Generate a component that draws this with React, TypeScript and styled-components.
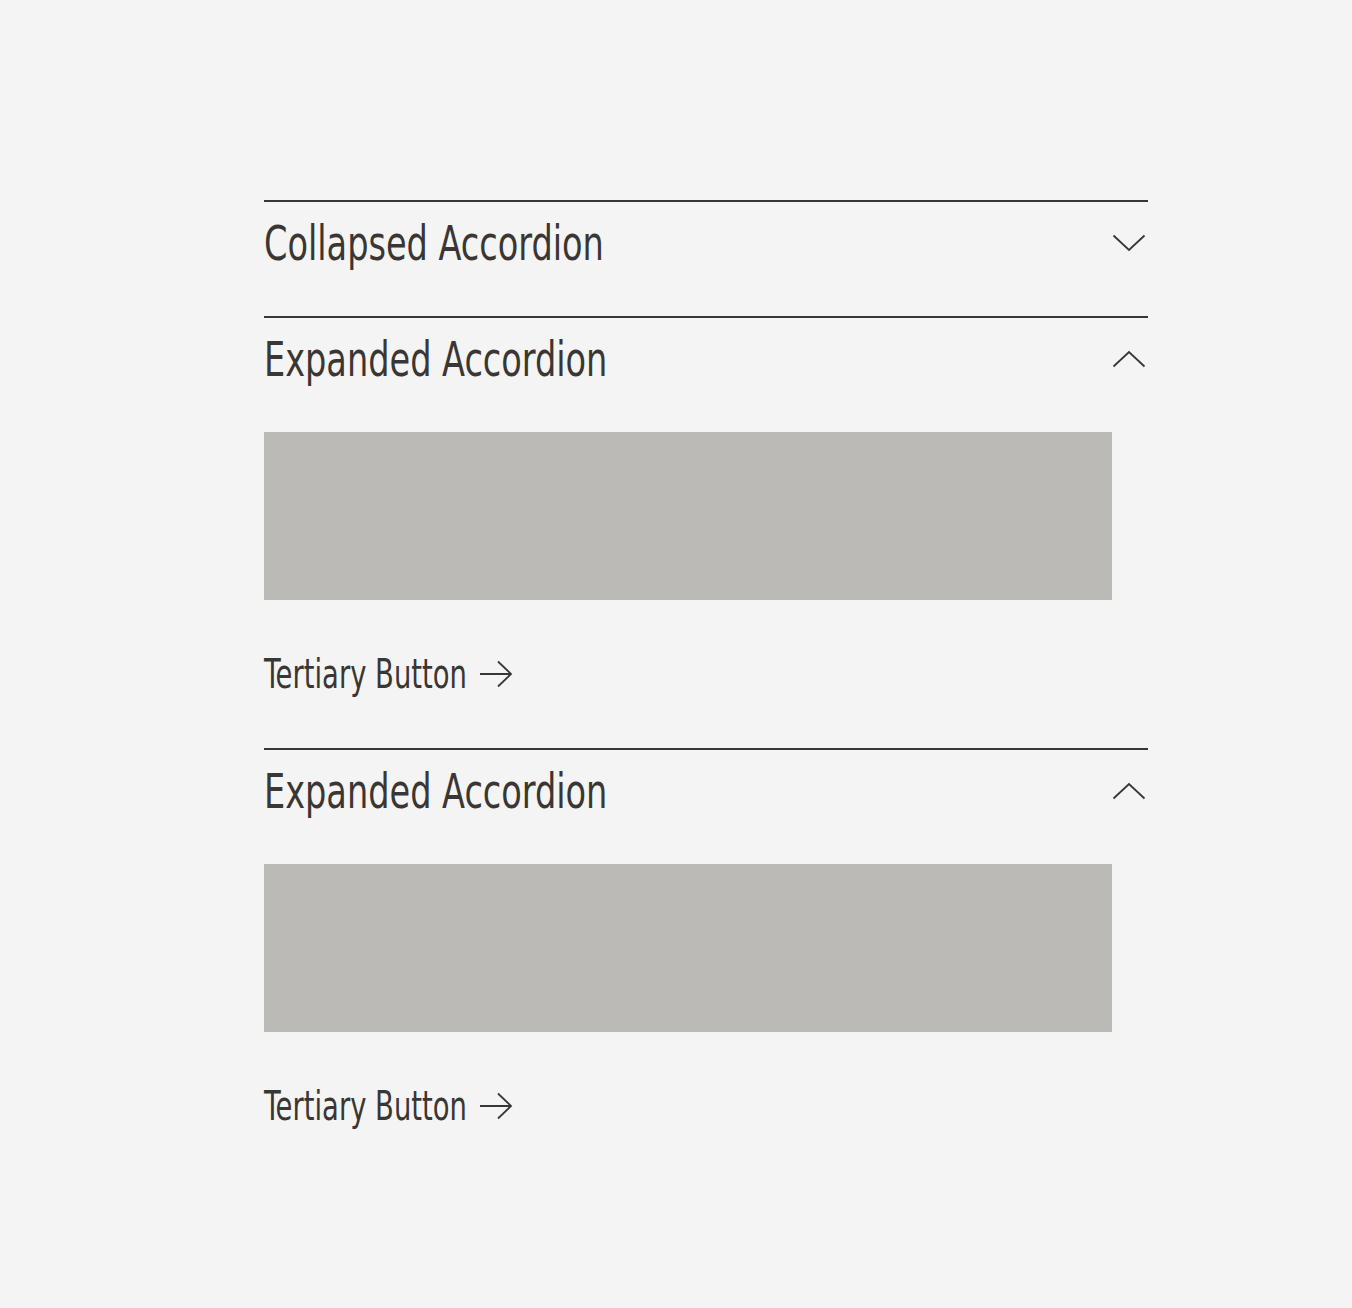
import React from 'react';
import styled, { createGlobalStyle } from 'styled-components';

const GlobalStyle = createGlobalStyle`
	html, body {
		margin: 0;
		padding: 0;
		background: #f4f4f4;
	}
	body {
		font-family: 'DejaVu Sans Condensed', 'Liberation Sans', sans-serif;
		color: #3a3633;
	}
`;

const Page = styled.div`
	min-height: 1308px;
	padding-top: 200px;
	box-sizing: border-box;
`;

const List = styled.div`
	width: 884px;
	margin-left: 264px;
`;

const Item = styled.section`
	border-top: 2px solid #3a3633;
`;

const Header = styled.button`
	display: flex;
	align-items: center;
	justify-content: space-between;
	width: 100%;
	height: 82px;
	padding: 0;
	border: 0;
	background: none;
	color: inherit;
	font: inherit;
	cursor: pointer;
`;

// the narrow face is wider than the reference one, so squeeze it horizontally
interface SqueezeProps {
	boxWidth: number;
	ratio: number;
}

const Squeeze = styled.span<SqueezeProps>`
	display: block;
	width: ${(props) => props.boxWidth}px;
	white-space: nowrap;
	text-align: left;

	span {
		display: inline-block;
		transform: scaleX(${(props) => props.ratio});
		transform-origin: left center;
	}
`;

const Title = styled.span`
	font-size: 48px;
	font-weight: 400;
`;

const Chevron = styled.svg`
	width: 34px;
	height: 18px;
	margin-right: 2px;
`;

interface PanelProps {
	open: boolean;
}

const Panel = styled.div<PanelProps>`
	padding-top: ${(props) => (props.open ? '32px' : '0')};
	padding-bottom: ${(props) => (props.open ? '56px' : '32px')};
`;

const Placeholder = styled.div`
	width: 848px;
	height: 168px;
	background: #bbbab6;
`;

const TertiaryButton = styled.a`
	display: inline-flex;
	align-items: center;
	gap: 14px;
	height: 36px;
	margin-top: 56px;
	font-size: 40px;
	color: inherit;
	text-decoration: none;
	cursor: pointer;
`;

const Arrow = styled.svg`
	width: 34px;
	height: 28px;
	margin-left: -1px;
`;

const ChevronIcon = ({ up }: { up: boolean }) => (
	<Chevron viewBox="0 0 34 18" fill="none" stroke="#3a3633" strokeWidth="1.8">
		{up ? <path d="M1.5 16.5 L17 2 L32.5 16.5" /> : <path d="M1.5 1.5 L17 16 L32.5 1.5" />}
	</Chevron>
);

const Accordion = ({ title, open }: { title: string; open: boolean }) => (
	<Item>
		<Header>
			<Squeeze boxWidth={340} ratio={0.777}>
				<Title>{title}</Title>
			</Squeeze>
			<ChevronIcon up={open} />
		</Header>
		<Panel open={open}>
			{open && (
				<>
					<Placeholder />
					<TertiaryButton>
						<Squeeze boxWidth={202} ratio={0.762}>
							<span>Tertiary Button</span>
						</Squeeze>
						<Arrow viewBox="0 0 34 28" fill="none" stroke="#3a3633" strokeWidth="1.8">
							<path d="M1 14 H32 M19 1.5 L32 14 L19 26.5" />
						</Arrow>
					</TertiaryButton>
				</>
			)}
		</Panel>
	</Item>
);

const App = () => (
	<Page>
		<GlobalStyle />
		<List>
			<Accordion title="Collapsed Accordion" open={false} />
			<Accordion title="Expanded Accordion" open />
			<Accordion title="Expanded Accordion" open />
		</List>
	</Page>
);

export default App;
